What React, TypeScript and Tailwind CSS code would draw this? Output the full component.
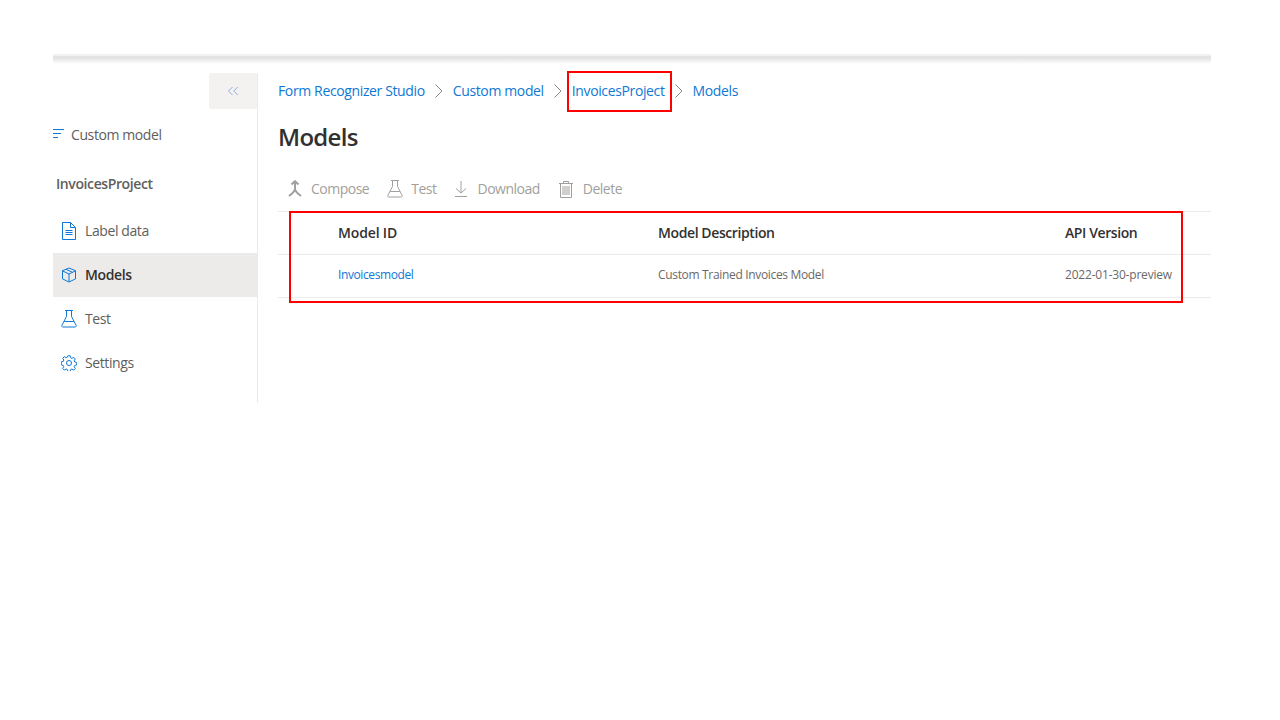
import { ChevronsLeft } from 'lucide-react';

const FONT = 'font-["Open_Sans","Noto_Sans",sans-serif]';

function DocIcon() {
  return (
    <svg width="16" height="18" viewBox="0 0 16 18" fill="none" stroke="#0f78d4" strokeWidth="1">
      <path d="M1.5 0.5h8l5 5v12h-13z" />
      <path d="M9.5 0.5v5h5" />
      <path d="M4.5 8.5h7M4.5 10.5h7M4.5 12.5h7" />
    </svg>
  );
}

function CubeIcon() {
  return (
    <svg width="16" height="16" viewBox="0 0 16 16" fill="none" stroke="#0f78d4" strokeWidth="1">
      <path d="M8 1l6.5 2.7v8.2L8 15l-6.5-3.1V3.7z" />
      <path d="M1.5 3.9L8 7l6.5-3.1M8 7v8M5 2.3l6.5 3" />
    </svg>
  );
}

function FlaskIcon({ color }: { color: string }) {
  return (
    <svg width="16" height="18" viewBox="0 0 16 18" fill="none" stroke={color} strokeWidth="1">
      <path d="M4 0.5h8M5.5 0.5v6L0.9 15.3c-.4.8.1 1.7 1 1.7h12.2c.9 0 1.4-.9 1-1.7L10.5 6.5v-6" />
      <path d="M3.2 11.5h9.6" />
    </svg>
  );
}

function GearIcon() {
  return (
    <svg width="16" height="16" viewBox="0 0 16 16" fill="none" stroke="#0f78d4" strokeWidth="1">
      <circle cx="8" cy="8" r="2.5" />
      <path d="M6.8.8h2.4l.4 2 1.3.6 1.8-1.1 1.6 1.7-1.1 1.7.5 1.3 2 .5v2.4l-2 .5-.5 1.3 1.1 1.7-1.6 1.7-1.8-1.1-1.3.6-.4 2H6.8l-.4-2-1.3-.6-1.8 1.1-1.6-1.7 1.1-1.7-.5-1.3-2-.5V6.8l2-.5.5-1.3-1.1-1.7 1.6-1.7 1.8 1.1 1.3-.6z" />
    </svg>
  );
}

function ComposeIcon() {
  return (
    <svg width="16" height="18" viewBox="0 0 16 18" fill="none" stroke="#a19f9d" strokeWidth="2">
      <path d="M4.5 4.5L8 1.2l3.5 3.3M8 1.2V9c0 2.5-2.8 4.5-6 7M8 9c0 2.5 2.8 4.5 6 7" />
    </svg>
  );
}

function DownloadIcon() {
  return (
    <svg width="14" height="18" viewBox="0 0 14 18" fill="none" stroke="#a19f9d" strokeWidth="1">
      <path d="M7 1v12M2 8.500l5 4.500 5-4.500M1 16.500h12" />
    </svg>
  );
}

function TrashIcon() {
  return (
    <svg width="16" height="18" viewBox="0 0 16 18" fill="none" stroke="#a19f9d" strokeWidth="1">
      <path d="M1 3.5h14M5.5 3.5v-2h5v2M2.5 3.5v14h11v-14" />
      <path d="M5 6v9M7 6v9M9 6v9M11 6v9" />
    </svg>
  );
}

function Chevron() {
  return (
    <svg width="8" height="14" viewBox="0 0 8 14" fill="none" stroke="#8a8886" strokeWidth="1" className="mx-[10px]">
      <path d="M0.5 0.5L7 7l-6.5 6.5" />
    </svg>
  );
}

function NavItem({ icon, label, active }: { icon: React.ReactNode; label: string; active?: boolean }) {
  return (
    <div className={`flex h-[44px] items-center ${active ? 'bg-[#edebe9] font-semibold text-[#323130]' : 'text-[#605e5c]'}`}>
      <div className="flex w-[32px] justify-center">{icon}</div>
      <span className="pb-[2px] text-[14px]">{label}</span>
    </div>
  );
}

function ToolButton({ icon, label, gap }: { icon: React.ReactNode; label: string; gap: string }) {
  return (
    <div className={`flex items-center ${gap} text-[14px] tracking-[-0.5px] text-[#a19f9d]`}>
      {icon}
      <span>{label}</span>
    </div>
  );
}

export default function App() {
  return (
    <div className={`${FONT} min-h-[720px] bg-white pl-[53px] pt-[54px] tracking-[-0.4px]`}>
      <div className="w-[1158px]">
        {/* Header shadow */}
        <div className="h-[10px] bg-gradient-to-b from-[#f2f1f0] from-[15%] via-[#dedede] via-[28%] to-white" />

        <div className="mt-[9px] flex">
          {/* Sidebar */}
          <aside className="h-[330px] w-[205px] border-r border-[#edebe9]">
            <div className="flex justify-end">
              <div className="flex h-[36px] w-[48px] items-center justify-center rounded-[2px] bg-[#f3f2f1]">
                <ChevronsLeft size={18} strokeWidth={1} color="#6f94d0" />
              </div>
            </div>

            <div className="mt-[15px] flex h-[20px] items-center">
              <svg width="12" height="10" viewBox="0 0 12 10" fill="none" stroke="#0f78d4" strokeWidth="1">
                <path d="M0 0.5h11M0 4.5h8M0 8.5h5" />
              </svg>
              <span className="ml-[6px] text-[14px] text-[#605e5c]">Custom model</span>
            </div>

            <div className="mt-[30px] pl-[3px] text-[14px] font-semibold leading-[20px] text-[#605e5c]">InvoicesProject</div>

            <div className="mt-[15px]">
              <NavItem icon={<DocIcon />} label="Label data" />
              <NavItem icon={<CubeIcon />} label="Models" active />
              <NavItem icon={<FlaskIcon color="#0f78d4" />} label="Test" />
              <NavItem icon={<GearIcon />} label="Settings" />
            </div>
          </aside>

          {/* Main */}
          <main className="relative flex-1 pl-[20px]">
            <nav className="flex h-[35px] items-center text-[14px] tracking-[-0.37px] text-[#0f78d4]">
              <span>Form Recognizer Studio</span>
              <Chevron />
              <span>Custom model</span>
              <Chevron />
              <span>InvoicesProject</span>
              <Chevron />
              <span>Models</span>
            </nav>

            <h1 className="mt-[11px] text-[24px] font-semibold leading-[36px] tracking-[-0.7px] text-[#323130]">Models</h1>

            <div className="mt-[13px] flex h-[44px] items-center gap-[18px] border-b border-[#edebe9] pb-[2px] pl-[9px]">
              <ToolButton icon={<ComposeIcon />} label="Compose" gap="gap-[8px]" />
              <ToolButton icon={<FlaskIcon color="#a19f9d" />} label="Test" gap="gap-[8px]" />
              <ToolButton icon={<DownloadIcon />} label="Download" gap="gap-[9px]" />
              <ToolButton icon={<TrashIcon />} label="Delete" gap="gap-[9px]" />
            </div>

            {/* Table */}
            <div className="flex h-[43px] items-center border-b border-[#edebe9] pb-[2px] text-[14px] font-semibold text-[#323130]">
              <div className="w-[380px] pl-[60px] tracking-[-0.15px]">Model ID</div>
              <div className="w-[407px]">Model Description</div>
              <div>API Version</div>
            </div>
            <div className="flex h-[43px] items-center border-b border-[#edebe9] pb-[2px] text-[12px] text-[#6b6967]">
              <div className="w-[380px] pl-[60px] text-[#0f78d4]">Invoicesmodel</div>
              <div className="w-[407px] tracking-[-0.33px]">Custom Trained Invoices Model</div>
              <div className="tracking-[-0.2px]">2022-01-30-preview</div>
            </div>

            {/* Red annotations */}
            <div className="absolute left-[309px] top-[-2px] h-[41px] w-[105px] border-2 border-[#ff0000]" />
            <div className="absolute left-[31px] top-[138px] h-[92px] w-[894px] border-2 border-[#ff0000]" />
          </main>
        </div>
      </div>
    </div>
  );
}
